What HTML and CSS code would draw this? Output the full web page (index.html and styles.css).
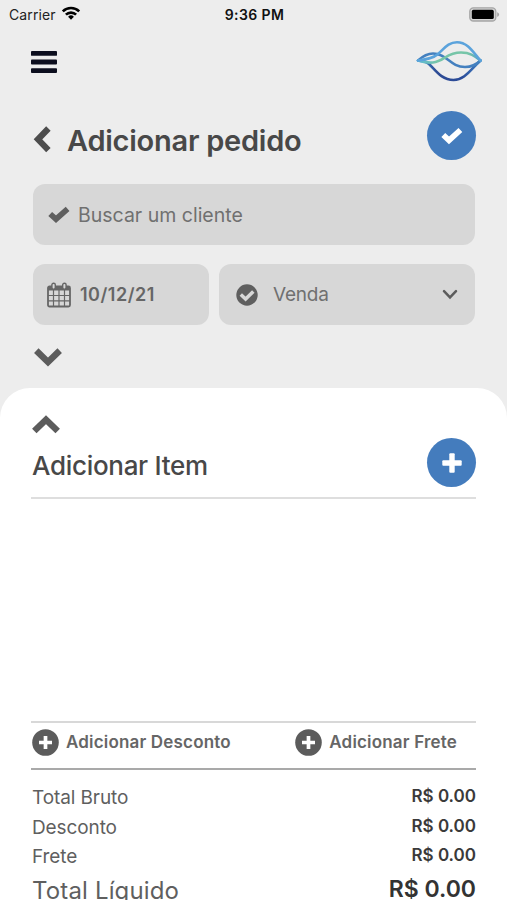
FILE: index.html
```html
<!DOCTYPE html>
<html lang="pt-BR">
  <head>
    <meta charset="UTF-8" />
    <meta name="viewport" content="width=device-width,initial-scale=1.0" />
    <title>Adicionar pedido</title>
    <link rel="stylesheet" href="styles.css">
  </head>
  <body>
    <div class="status-bar">
      <div class="carrier">
        <span>Carrier</span>
        <svg width="18" height="14" viewBox="0 0 18 14" fill="none" stroke="#000" stroke-width="2.6">
          <path d="M0.8 5.4a11.6 11.6 0 0 1 16.4 0" />
          <path d="M3.9 8.7a7.2 7.2 0 0 1 10.2 0" />
          <path d="M9 13.7L6.1 10.8a4.1 4.1 0 0 1 5.8 0z" fill="#000" stroke="none" />
        </svg>
      </div>
      <div class="time">9:36 PM</div>
      <svg class="battery" width="31" height="15" viewBox="0 0 31 15">
        <rect x="0.8" y="0.8" width="26" height="13.2" rx="3.6" fill="#d4d4d4" stroke="#a5a5a5" stroke-width="1.3" />
        <rect x="2.8" y="2.8" width="22" height="9.2" rx="1.6" fill="#000" />
        <path d="M28.2 5.2c2.6 1 2.6 3.6 0 4.6z" fill="#a5a5a5" />
      </svg>
    </div>

    <header>
      <svg class="menu" width="26" height="22" viewBox="0 0 26 22" fill="#0c0e1e">
        <rect y="0" width="26" height="4.8" rx="0.9" />
        <rect y="8.6" width="26" height="4.8" rx="0.9" />
        <rect y="17.2" width="26" height="4.8" rx="0.9" />
      </svg>
      <svg class="logo" width="66" height="42" viewBox="0 0 66 42" fill="none" stroke-width="2.6" stroke-linecap="round">
        <defs>
          <linearGradient id="navy">
            <stop offset="0" stop-color="#4294cf" />
            <stop offset="0.3" stop-color="#2d4b94" />
            <stop offset="0.7" stop-color="#2b4b98" />
            <stop offset="1" stop-color="#3f7fc4" />
          </linearGradient>
          <linearGradient id="green">
            <stop offset="0" stop-color="#5bb7d4" />
            <stop offset="0.3" stop-color="#76c5a8" />
            <stop offset="0.8" stop-color="#76c5a8" />
            <stop offset="1" stop-color="#4f9fc9" />
          </linearGradient>
        </defs>
        <path d="M2 20.5C7 21 10 21 13 24C20 31 26 40 37.5 40C49 40 55 29 64.5 20.5" stroke="url(#navy)" />
        <path d="M2 20.5C7 16 12 13.5 17 13.5C31 13.5 34 27 49 27C56 27 60 25 64.5 20.5" stroke="#4480bf" />
        <path d="M2 20.5C9 22.5 13 23 17 22.5C28 21 31 12.5 45 12.5C54 12.5 59 16 64.5 20.5" stroke="url(#green)" />
        <path d="M2 20.5C10 19.5 17 18.5 22 14C28 9 32 2.2 41 2.2C52 2.2 57 12 64.5 20.5" stroke="#5ba3dc" />
      </svg>
    </header>

    <div class="title-row">
      <svg width="18" height="27" viewBox="0 0 18 27" fill="none" stroke="#4d4d4d" stroke-width="6.2">
        <path d="M15.4 2.5L5 13.3L15.4 24.1" />
      </svg>
      <h1>Adicionar pedido</h1>
      <div class="round-btn">
        <svg width="22" height="18" viewBox="0 0 22 18" fill="none" stroke="#fff" stroke-width="5.6">
          <path d="M2.3 8L8 13.4L19.4 3" />
        </svg>
      </div>
    </div>

    <div class="fields">
      <div class="field search">
        <svg width="22" height="18" viewBox="0 0 22 18" fill="none" stroke="#5f5f5f" stroke-width="5.6">
          <path d="M2.2 8L8 13.2L19.6 2.8" />
        </svg>
        <span>Buscar um cliente</span>
      </div>
      <div class="field date">
        <svg width="24" height="26" viewBox="0 0 24 26" fill="none" stroke="#666">
          <rect x="1" y="4.5" width="22" height="20" rx="1.5" stroke-width="1.8" />
          <path d="M1 4.5h22v4H1z" fill="#666" stroke="none" />
          <path d="M6.5 8v16M12 8v16M17.5 8v16M1 13.5h22M1 18.8h22" stroke-width="1.2" />
          <rect x="4.9" y="1.2" width="3.4" height="6" rx="1.6" fill="#d7d7d7" stroke-width="1.4" />
          <rect x="15.7" y="1.2" width="3.4" height="6" rx="1.6" fill="#d7d7d7" stroke-width="1.4" />
        </svg>
        <span>10/12/21</span>
      </div>
      <div class="field type">
        <svg width="22" height="22" viewBox="0 0 22 22">
          <circle cx="11" cy="11" r="10.7" fill="#5f5f5f" />
          <path d="M4.8 10.5L9.6 15L17.3 7.5" fill="none" stroke="#d7d7d7" stroke-width="3.5" />
        </svg>
        <span>Venda</span>
        <svg class="arrow" width="16" height="11" viewBox="0 0 16 11" fill="none" stroke="#5c5c5c" stroke-width="2.5">
          <path d="M2 2.2L8 8.4L14 2.2" stroke-linecap="round" />
        </svg>
      </div>
    </div>

    <svg class="expand" width="28" height="20" viewBox="0 0 28 20" fill="none" stroke="#5c5c5c" stroke-width="6.4">
      <path d="M2.3 3.6L14 15L25.7 3.6" />
    </svg>

    <main>
      <svg class="collapse" width="28" height="19" viewBox="0 0 28 19" fill="none" stroke="#5c5c5c" stroke-width="6.4">
        <path d="M2.3 16L14 4.6L25.7 16" />
      </svg>
      <div class="item-row">
        <h2>Adicionar Item</h2>
        <div class="round-btn">
          <svg width="20" height="20" viewBox="0 0 20 20" fill="#fff">
            <rect x="7.3" y="0.3" width="5.4" height="19.4" rx="1" />
            <rect x="0.3" y="7.3" width="19.4" height="5.4" rx="1" />
          </svg>
        </div>
      </div>

      <div class="items"></div>

      <div class="extras">
        <div class="extra">
          <svg width="27" height="27" viewBox="0 0 27 27">
            <circle cx="13.5" cy="13.5" r="13.3" fill="#5c5c5c" />
            <path d="M13.5 7v13M7 13.5h13" stroke="#fff" stroke-width="3.7" />
          </svg>
          <span>Adicionar Desconto</span>
        </div>
        <div class="extra">
          <svg width="27" height="27" viewBox="0 0 27 27">
            <circle cx="13.5" cy="13.5" r="13.3" fill="#5c5c5c" />
            <path d="M13.5 7v13M7 13.5h13" stroke="#fff" stroke-width="3.7" />
          </svg>
          <span>Adicionar Frete</span>
        </div>
      </div>

      <div class="totals">
        <div class="total"><span>Total Bruto</span><b>R$ 0.00</b></div>
        <div class="total"><span>Desconto</span><b>R$ 0.00</b></div>
        <div class="total"><span>Frete</span><b>R$ 0.00</b></div>
        <div class="total net"><span>Total Líquido</span><b>R$ 0.00</b></div>
      </div>
    </main>
  </body>
</html>
```
FILE: styles.css
```css
* {
  padding: 0;
  margin: 0;
  box-sizing: border-box;
  font-family: 'Inter', sans-serif;
}
body {
  height: 900px;
  overflow: hidden;
  display: flex;
  flex-direction: column;
  background-color: #ededed;
  white-space: nowrap;
}
body > * {
  flex-shrink: 0;
}
svg {
  display: block;
  flex-shrink: 0;
  overflow: visible;
}
.status-bar {
  height: 28px;
  padding: 0 7px 0 9px;
  display: grid;
  grid-template-columns: 1fr auto 1fr;
  align-items: center;
  font-size: 14px;
}
.carrier {
  display: flex;
  align-items: center;
  gap: 7px;
  letter-spacing: 0.1px;
  color: #222;
}
.carrier svg {
  margin: -2px 0 0 -1px;
}
.time {
  font-weight: 600;
  letter-spacing: 0.4px;
  color: #111;
}
.battery {
  justify-self: end;
}
header {
  height: 68px;
  padding: 0 25px 0 31px;
  display: flex;
  align-items: center;
  justify-content: space-between;
}
.logo {
  margin-top: -2px;
}
.title-row {
  height: 49px;
  margin-top: 15px;
  padding: 0 31px 0 33px;
  display: flex;
  align-items: center;
}
h1 {
  margin-left: 16px;
  padding-top: 9px;
  font-size: 29px;
  font-weight: 600;
  letter-spacing: -0.25px;
  color: #484848;
}
.title-row > svg {
  margin-top: 8px;
}
.round-btn {
  width: 49px;
  height: 49px;
  margin-left: auto;
  border-radius: 50%;
  display: flex;
  align-items: center;
  justify-content: center;
  background-color: #447cbd;
}
.fields {
  padding: 24px 32px 0 33px;
  display: grid;
  grid-template-columns: 176px 1fr;
  gap: 19px 10px;
}
.field {
  height: 61px;
  border-radius: 12px;
  display: flex;
  align-items: center;
  font-size: 19.5px;
  color: #707070;
  background-color: #d7d7d7;
}
.search {
  grid-column: span 2;
  padding-left: 15px;
  gap: 8px;
}
.date {
  padding-left: 14px;
  gap: 9px;
  font-size: 18px;
  font-weight: 600;
  letter-spacing: 0.5px;
  color: #666;
}
.type {
  padding: 0 17px;
  gap: 15px;
  font-size: 19px;
  letter-spacing: -0.2px;
}
.arrow {
  margin-left: auto;
}
.expand {
  margin: 22px 0 0 34px;
}
main {
  flex-grow: 1;
  margin-top: 21px;
  padding: 27px 31px 0;
  border-radius: 30px 30px 0 0;
  background-color: #fff;
}
.collapse {
  margin-left: 1px;
}
.item-row {
  height: 65px;
  padding-top: 4px;
  display: flex;
  border-bottom: 2px solid #dedede;
}
h2 {
  margin-left: 1px;
  padding-top: 12px;
  font-size: 26px;
  line-height: 32px;
  font-weight: 500;
  letter-spacing: -0.3px;
  color: #484848;
}
.items {
  height: 222px;
}
.extras {
  height: 49px;
  padding: 0 19px 6px 1px;
  display: flex;
  align-items: center;
  justify-content: space-between;
  border-top: 2px solid #d8d8d8;
  border-bottom: 2px solid #a9a9a9;
}
.extra {
  display: flex;
  align-items: center;
  gap: 7px;
  font-size: 17px;
  font-weight: 600;
  letter-spacing: 0.18px;
  color: #666;
}
.extra span {
  margin-top: -1px;
}
.totals {
  padding: 13px 0 0 1px;
}
.total {
  height: 29.7px;
  display: flex;
  justify-content: space-between;
  line-height: 30px;
  font-size: 19px;
  letter-spacing: -0.1px;
  color: #5f5f5f;
}
.total b {
  margin-top: -2px;
  font-size: 17px;
  font-weight: 600;
  letter-spacing: 0;
  color: #3a3a3a;
}
.net {
  font-size: 24px;
  line-height: 38px;
  letter-spacing: 0.15px;
}
.net b {
  font-size: 23px;
  color: #333;
}
```
